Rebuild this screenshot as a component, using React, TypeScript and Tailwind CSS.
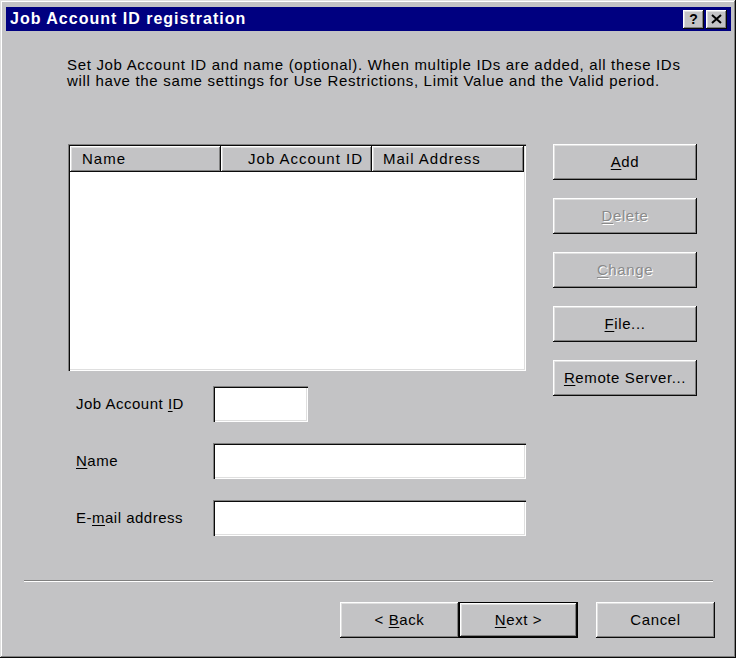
import React from 'react';

const raised =
  'shadow-[inset_-1px_-1px_#0a0a0a,inset_1px_1px_#ffffff,inset_-2px_-2px_#808080,inset_2px_2px_#dfdfdf]';
const sunken =
  'shadow-[inset_1px_1px_#808080,inset_2px_2px_#0a0a0a,inset_-1px_-1px_#ffffff,inset_-2px_-2px_#dfdfdf]';

const Mn = ({ children }: { children: React.ReactNode }) => <span className="underline underline-offset-2">{children}</span>;

const SideButton = ({ children, disabled }: { children: React.ReactNode; disabled?: boolean }) => (
  <button
    className={`h-[36px] w-[144px] bg-[#c3c3c5] text-[15px] tracking-[0.6px] ${raised} ${
      disabled ? 'text-[#8a8a8a] [text-shadow:1px_1px_#ffffff]' : 'text-black'
    }`}
  >
    {children}
  </button>
);

const Field = ({ label, width }: { label: React.ReactNode; width: string }) => (
  <div className="flex items-center">
    <div className="w-[146px] pl-[9px] text-[15px] tracking-[0.5px]">{label}</div>
    <div className={`h-[36px] bg-white ${width} ${sunken}`} />
  </div>
);

export default function App() {
  return (
    <div className="h-[659px] w-[737px] bg-white font-['Liberation_Sans',Arial,sans-serif] text-black">
      <div
        className={`flex h-[658px] w-[736px] flex-col bg-[#c3c3c5] pb-[5px] pl-[6px] pr-[5px] pt-[7px] shadow-[inset_-1px_-1px_#0a0a0a,inset_1px_1px_#dfdfdf,inset_-2px_-2px_#808080,inset_2px_2px_#ffffff]`}
      >
        {/* title bar */}
        <div className="flex h-[24px] items-center justify-between bg-[#000080] pl-[4px] pr-[4px]">
          <span className="text-[16px] font-bold tracking-[1px] text-white">Job Account ID registration</span>
          <div className="flex gap-[2px]">
            <div className={`flex h-[19px] w-[21px] items-center justify-center bg-[#c3c3c5] text-[14px] font-bold ${raised}`}>?</div>
            <div className={`flex h-[19px] w-[21px] items-center justify-center bg-[#c3c3c5] ${raised}`}>
              <svg width="11" height="10" viewBox="0 0 11 10">
                <path d="M1 1 L10 9 M10 1 L1 9" stroke="#000" strokeWidth="2" />
              </svg>
            </div>
          </div>
        </div>

        {/* body */}
        <div className="flex flex-1 flex-col pl-[61px] pr-[17px] pt-[26px]">
          <p className="text-[15px] leading-[16px] tracking-[0.68px]">
            Set Job Account ID and name (optional). When multiple IDs are added, all these IDs
            <br />
            will have the same settings for Use Restrictions, Limit Value and the Valid period.
          </p>

          <div className="mt-[55px] flex gap-[27px] pl-[1px]">
            {/* list view */}
            <div className={`flex h-[227px] w-[458px] flex-col bg-white p-[2px] ${sunken}`}>
              <div className="flex h-[26px] text-[15px] tracking-[1px]">
                <div className={`flex w-[151px] items-center bg-[#c3c3c5] pl-[12px] ${raised}`}>Name</div>
                <div className={`flex w-[151px] items-center justify-end bg-[#c3c3c5] pr-[9px] ${raised}`}>Job Account ID</div>
                <div className={`flex w-[152px] items-center bg-[#c3c3c5] pl-[11px] ${raised}`}>Mail Address</div>
              </div>
            </div>

            <div className="flex flex-col gap-[18px]">
              <SideButton>
                <Mn>A</Mn>dd
              </SideButton>
              <SideButton disabled>
                <Mn>D</Mn>elete
              </SideButton>
              <SideButton disabled>
                <Mn>C</Mn>hange
              </SideButton>
              <SideButton>
                <Mn>F</Mn>ile...
              </SideButton>
              <SideButton>
                <Mn>R</Mn>emote Server...
              </SideButton>
            </div>
          </div>

          <div className="-mt-[10px] flex flex-col gap-[21px]">
            <Field
              label={
                <>
                  Job Account <Mn>I</Mn>D
                </>
              }
              width="w-[95px]"
            />
            <Field
              label={
                <>
                  <Mn>N</Mn>ame
                </>
              }
              width="w-[313px]"
            />
            <Field
              label={
                <>
                  E-<Mn>m</Mn>ail address
                </>
              }
              width="w-[313px]"
            />
          </div>
        </div>

        {/* separator */}
        <div className="mx-[18px] border-b border-t border-b-white border-t-[#808080]" />

        <div className="flex justify-end gap-[18px] pb-[15px] pr-[16px] pt-[20px] text-[15px] tracking-[0.6px]">
          <div className="flex">
            <button className={`h-[36px] w-[119px] bg-[#c3c3c5] ${raised}`}>
              &lt; <Mn>B</Mn>ack
            </button>
            <button className="h-[36px] w-[119px] border border-black bg-[#c3c3c5]">
              <div className={`flex h-full w-full items-center justify-center ${raised}`}>
                <span>
                  <Mn>N</Mn>ext &gt;
                </span>
              </div>
            </button>
          </div>
          <button className={`h-[36px] w-[119px] bg-[#c3c3c5] ${raised}`}>Cancel</button>
        </div>
      </div>
    </div>
  );
}
